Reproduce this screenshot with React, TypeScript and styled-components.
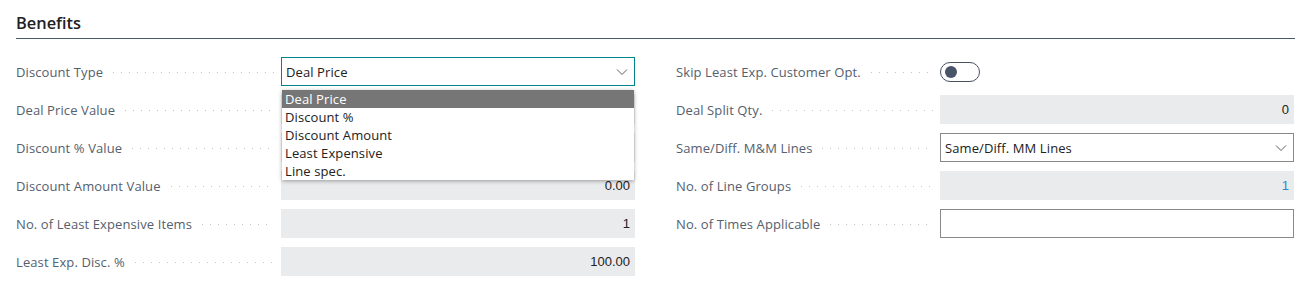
import React from 'react';
import styled, { createGlobalStyle } from 'styled-components';

const GlobalStyle = createGlobalStyle`
  body {
    margin: 0;
    background: #fff;
    font-family: "Segoe UI", "Open Sans", "Noto Sans", sans-serif;
  }
`;

const Page = styled.div`
  padding: 0 8px 0 16px;
  width: 1279px;
`;

const Title = styled.h2`
  margin: 0;
  padding-top: 12px;
  height: 26px;
  font-size: 16.4px;
  font-weight: 600;
  color: #212121;
  line-height: 22px;
  border-bottom: 1px solid #4b5a68;
`;

const Columns = styled.div`
  display: grid;
  grid-template-columns: 619px 618px;
  column-gap: 41px;
  padding-top: 18px;
`;

const Column = styled.div`
  display: flex;
  flex-direction: column;
  gap: 9px;
`;

const Row = styled.div<{ $labelWidth: number }>`
  display: grid;
  grid-template-columns: ${({ $labelWidth }) => $labelWidth}px 354px;
  height: 29px;
  align-items: center;
`;

const Label = styled.div`
  display: flex;
  align-items: center;
  font-size: 13px;
  letter-spacing: 0.1px;
  color: #55606e;
  white-space: nowrap;
  padding-right: 7px;
`;

const Leader = styled.span`
  flex: 1;
  height: 1px;
  margin: 1px 0 0 10px;
  background-image: linear-gradient(to right, #c4c4c4 1px, transparent 1px);
  background-size: 8px 1px;
  background-repeat: repeat-x;
`;

const ReadOnly = styled.div<{ $link?: boolean }>`
  height: 29px;
  box-sizing: border-box;
  background: #eaebec;
  padding: 0 5px;
  display: flex;
  align-items: center;
  justify-content: flex-end;
  font-family: "Liberation Sans", Arial, sans-serif;
  font-size: 13px;
  color: ${({ $link }) => ($link ? '#2b88d8' : '#212121')};
`;

const TextBox = styled.div`
  height: 29px;
  box-sizing: border-box;
  border: 1px solid #8a8886;
  background: #fff;
`;

const SelectWrap = styled.div`
  position: relative;
`;

const SelectBox = styled.div<{ $focused?: boolean }>`
  height: 29px;
  box-sizing: border-box;
  border: 1px solid ${({ $focused }) => ($focused ? '#00858a' : '#8a8886')};
  background: #fff;
  display: flex;
  align-items: center;
  justify-content: space-between;
  padding: 0 6px 0 4px;
  font-size: 13px;
  letter-spacing: 0.1px;
  color: #212121;
`;

const Chevron = () => (
  <svg width="12" height="8" viewBox="0 0 12 8">
    <path d="M1 1.5 L6 6.5 L11 1.5" fill="none" stroke="#605e5c" strokeWidth="1" />
  </svg>
);

const Popup = styled.ul`
  position: absolute;
  top: 33px;
  left: 1px;
  right: 1px;
  margin: 0;
  padding: 0;
  list-style: none;
  background: #fff;
  box-shadow: 0 1px 4px rgba(0, 0, 0, 0.35);
  z-index: 2;
`;

const Option = styled.li<{ $active?: boolean }>`
  height: 18px;
  line-height: 18px;
  padding-left: 3px;
  font-size: 13px;
  letter-spacing: 0.1px;
  background: ${({ $active }) => ($active ? '#767676' : 'transparent')};
  color: ${({ $active }) => ($active ? '#fff' : '#212121')};
`;

const Toggle = styled.div`
  width: 40px;
  height: 20px;
  box-sizing: border-box;
  border: 1px solid #4a5160;
  border-radius: 10px;
  display: flex;
  align-items: center;
  padding-left: 4px;
`;

const Knob = styled.span`
  width: 12px;
  height: 12px;
  border-radius: 50%;
  background: #4a5468;
`;

const options = ['Deal Price', 'Discount %', 'Discount Amount', 'Least Expensive', 'Line spec.'];

const Field = ({
  label,
  labelWidth = 265,
  children,
}: {
  label: string;
  labelWidth?: number;
  children: React.ReactNode;
}) => (
  <Row $labelWidth={labelWidth}>
    <Label>
      {label}
      <Leader />
    </Label>
    {children}
  </Row>
);

export default function App() {
  return (
    <Page>
      <GlobalStyle />
      <Title>Benefits</Title>
      <Columns>
        <Column>
          <Field label="Discount Type">
            <SelectWrap>
              <SelectBox $focused>
                Deal Price
                <Chevron />
              </SelectBox>
              <Popup>
                {options.map((o, i) => (
                  <Option key={o} $active={i === 0}>
                    {o}
                  </Option>
                ))}
              </Popup>
            </SelectWrap>
          </Field>
          <Field label="Deal Price Value">
            <ReadOnly>0.00</ReadOnly>
          </Field>
          <Field label="Discount % Value">
            <ReadOnly>0.00</ReadOnly>
          </Field>
          <Field label="Discount Amount Value">
            <ReadOnly>0.00</ReadOnly>
          </Field>
          <Field label="No. of Least Expensive Items">
            <ReadOnly>1</ReadOnly>
          </Field>
          <Field label="Least Exp. Disc. %">
            <ReadOnly>100.00</ReadOnly>
          </Field>
        </Column>
        <Column>
          <Field label="Skip Least Exp. Customer Opt." labelWidth={264}>
            <Toggle>
              <Knob />
            </Toggle>
          </Field>
          <Field label="Deal Split Qty." labelWidth={264}>
            <ReadOnly>0</ReadOnly>
          </Field>
          <Field label="Same/Diff. M&M Lines" labelWidth={264}>
            <SelectBox>
              Same/Diff. MM Lines
              <Chevron />
            </SelectBox>
          </Field>
          <Field label="No. of Line Groups" labelWidth={264}>
            <ReadOnly $link>1</ReadOnly>
          </Field>
          <Field label="No. of Times Applicable" labelWidth={264}>
            <TextBox />
          </Field>
        </Column>
      </Columns>
    </Page>
  );
}
